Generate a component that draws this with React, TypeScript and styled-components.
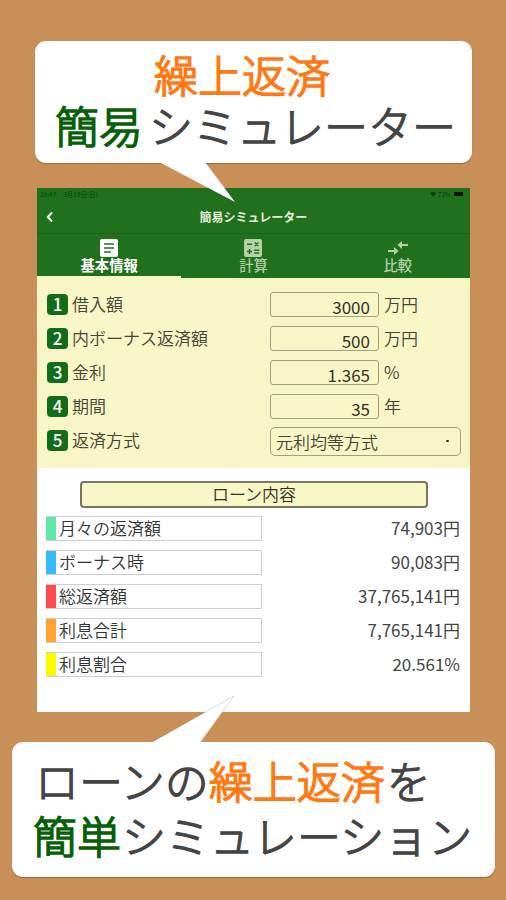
import React from 'react';
import styled, { createGlobalStyle } from 'styled-components';

const Global = createGlobalStyle`
  * { box-sizing: border-box; }
  body { margin: 0; background: #c89058; font-family: 'Noto Sans CJK JP', sans-serif; }
`;

const Poster = styled.main`
  width: 506px;
  height: 900px;
  background: #c89058;
  display: flex;
  flex-direction: column;
  overflow: hidden;
`;

const Bubble = styled.section<{ $bottom?: boolean }>`
  position: relative;
  z-index: 1;
  flex: none;
  display: flex;
  flex-direction: column;
  width: ${p => (p.$bottom ? 483 : 437)}px;
  height: ${p => (p.$bottom ? 135 : 122)}px;
  margin: ${p => (p.$bottom ? '30px 0 0 12px' : '41px 0 0 35px')};
  padding: ${p => (p.$bottom ? '11px 0 0 21px' : '8px 0 0 20px')};
  background: #fff;
  border-radius: 11px;
  box-shadow: 0 1px 1px rgba(90, 60, 30, 0.45);
`;

const Tail = styled.svg<{ $bottom?: boolean }>`
  position: absolute;
  left: ${p => (p.$bottom ? 138 : 125)}px;
  top: ${p => (p.$bottom ? -48 : 120)}px;
  overflow: visible;
`;

const Headline = styled.p<{ $height: number; $indent?: number }>`
  margin: 0 0 0 ${p => p.$indent ?? 0}px;
  height: ${p => p.$height}px;
  line-height: ${p => p.$height}px;
  font-size: 44px;
  font-weight: 300;
  white-space: nowrap;
  color: #444;
  -webkit-text-stroke: 1.3px currentColor;
`;

const Accent = styled.span<{ $tone: 'orange' | 'green'; $gap?: number }>`
  color: ${p => (p.$tone === 'orange' ? '#ff7a14' : '#066006')};
  margin-right: ${p => p.$gap ?? 0}px;
  -webkit-text-stroke-width: 1.6px;
`;

const Device = styled.section`
  flex: none;
  width: 433px;
  height: 524px;
  margin: 25px 0 0 37px;
  background: #fff;
  display: flex;
  flex-direction: column;
`;

const AppHeader = styled.header`
  height: 90px;
  background: #21701e;
  display: flex;
  flex-direction: column;
`;

const StatusBar = styled.div`
  height: 12px;
  padding: 0 7px 0 3px;
  display: flex;
  align-items: center;
  font-size: 6.5px;
  line-height: 12px;
  color: #0c3d0e;
`;

const StatusDate = styled.span`
  margin-left: 7px;
  flex: 1;
`;

const Battery = styled.i`
  width: 9px;
  height: 4px;
  margin-left: 3px;
  border-radius: 1px;
  background: #061406;
`;

const TitleBar = styled.div`
  height: 34px;
  display: grid;
  grid-template-columns: 60px 1fr 60px;
  align-items: center;
  border-bottom: 1px solid #1c641b;
`;

const BackIcon = styled.svg`
  margin-left: 9px;
`;

const AppTitle = styled.h1`
  margin: 0;
  text-align: center;
  font-size: 12px;
  line-height: 34px;
  font-weight: 700;
  color: #e6f1dc;
`;

const Tabs = styled.nav`
  flex: 1;
  display: grid;
  grid-template-columns: repeat(3, 1fr);
`;

const Tab = styled.div<{ $active?: boolean }>`
  display: flex;
  flex-direction: column;
  align-items: center;
  padding-top: 4px;
  color: ${p => (p.$active ? '#fff' : '#b5d1a8')};
  border-bottom: 2px solid ${p => (p.$active ? '#f8f6c6' : 'transparent')};
`;

const TabLabel = styled.span<{ $active?: boolean }>`
  margin-top: -2px;
  font-size: 14.3px;
  line-height: 18px;
  font-weight: ${p => (p.$active ? 700 : 500)};
`;

const Form = styled.div`
  height: 190px;
  background: #f8f6c6;
  padding: 10px 9px 0 10px;
`;

const FormRow = styled.div`
  height: 34px;
  display: grid;
  grid-template-columns: 25px 198px 1fr;
  align-items: center;
  font-size: 17px;
  line-height: 24px;
  color: #444438;
  font-weight: 350;
`;

const NumberBadge = styled.span`
  width: 21px;
  height: 21px;
  margin-bottom: 1px;
  border-radius: 4px;
  background: #136c19;
  color: #fff;
  font-size: 17px;
  line-height: 20px;
  font-weight: 500;
  text-align: center;
`;

const Label = styled.span`
  padding-bottom: 3px;
`;

const Field = styled.div`
  display: flex;
  align-items: center;
  gap: 5px;
`;

const Unit = styled.span`
  padding-bottom: 3px;
`;

const InputBox = styled.span`
  width: 109px;
  height: 25px;
  margin-bottom: 1px;
  border: 1px solid #a3a184;
  border-radius: 3px;
  padding-right: 8px;
  text-align: right;
  line-height: 27px;
  font-weight: 400;
  color: #333329;
`;

const SelectBox = styled.div`
  width: 191px;
  height: 29px;
  border: 1px solid #a3a184;
  border-radius: 5px;
  padding: 0 11px 0 5px;
  display: flex;
  justify-content: space-between;
  align-items: center;
  line-height: 27px;
`;

const SelectMark = styled.i`
  width: 3px;
  height: 2px;
  border-radius: 1px;
  background: #33332b;
`;

const Results = styled.div`
  flex: 1;
  padding: 13px 10px 0 9px;
`;

const ResultsTitle = styled.h2`
  width: 348px;
  height: 27px;
  margin: 0 0 3px 34px;
  border: 2px solid #77765f;
  border-radius: 4px;
  background: #f8f6c6;
  text-align: center;
  font-size: 17px;
  line-height: 21px;
  font-weight: 350;
  color: #333329;
`;

const ResultRow = styled.div`
  height: 34px;
  display: flex;
  align-items: center;
  justify-content: space-between;
  font-size: 17px;
  font-weight: 350;
  color: #333;
`;

const ResultLabel = styled.span<{ $color: string }>`
  width: 216px;
  height: 25px;
  border: 1px solid #cfcfcf;
  border-left: 0;
  padding-left: 13px;
  background: linear-gradient(90deg, ${p => p.$color} 10px, #fff 10px);
  background-origin: border-box;
  line-height: 22px;
`;

const ResultValue = styled.span`
  line-height: 24px;
  padding-bottom: 1px;
  font-weight: 400;
  color: #444;
`;

const DocumentIcon = () => (
  <svg width="20" height="20" viewBox="0 0 20 20">
    <rect x="1" y="1" width="18" height="18" rx="2" fill="currentColor" />
    <path d="M5 6h10M5 10h10M5 14h7" stroke="#21701e" strokeWidth="1.7" />
  </svg>
);

const CalculatorIcon = () => (
  <svg width="20" height="20" viewBox="0 0 20 20">
    <rect x="1" y="1" width="18" height="18" rx="2" fill="currentColor" />
    <path d="M4 6.200h5M11.800 4.500l3.400 3.400M15.200 4.500L11.800 7.900M4 13.500h5M6.500 11v5M11.300 12.300h5M11.300 15h5" stroke="#21701e" strokeWidth="1.5" />
  </svg>
);

const CompareIcon = () => (
  <svg width="20" height="20" viewBox="0 0 20 20">
    <path d="M0 12h6V9l4.500 4-4.500 4v-3H0zM20 6h-6V3L9.500 7l4.500 4V8h6z" fill="currentColor" />
  </svg>
);

const fields = [
  { label: '借入額', value: '3000', unit: '万円' },
  { label: '内ボーナス返済額', value: '500', unit: '万円' },
  { label: '金利', value: '1.365', unit: '%' },
  { label: '期間', value: '35', unit: '年' },
];

const results = [
  { label: '月々の返済額', value: '74,903円', color: '#62e8a6' },
  { label: 'ボーナス時', value: '90,083円', color: '#38b9fa' },
  { label: '総返済額', value: '37,765,141円', color: '#ff4b50' },
  { label: '利息合計', value: '7,765,141円', color: '#ffa331' },
  { label: '利息割合', value: '20.561%', color: '#fbfb00' },
];

export default function App() {
  return (
    <>
      <Global />
      <Poster>
        <Bubble>
          <Headline $height={51} $indent={99}>
            <Accent $tone="orange">繰上返済</Accent>
          </Headline>
          <Headline $height={51}>
            <Accent $tone="green" $gap={6}>簡易</Accent>シミュレーター
          </Headline>
          <Tail width="75" height="42" viewBox="0 0 75 42">
            <path d="M1 1H45L75 41L1 2z" fill="#fff" />
          </Tail>
        </Bubble>

        <Device>
          <AppHeader>
            <StatusBar>
              <span>10:43</span>
              <StatusDate>3月19日(日)</StatusDate>
              <svg width="6" height="5" viewBox="0 0 6 5"><path d="M0 1Q3-1 6 1L3 5z" fill="#0c3d0e" /></svg>
              <span>&nbsp;72%</span>
              <Battery />
            </StatusBar>
            <TitleBar>
              <BackIcon width="8" height="12" viewBox="0 0 8 12">
                <path d="M6 1.500L1.800 6L6 10.500" fill="none" stroke="#fff" strokeWidth="2" />
              </BackIcon>
              <AppTitle>簡易シミュレーター</AppTitle>
            </TitleBar>
            <Tabs>
              <Tab $active><DocumentIcon /><TabLabel $active>基本情報</TabLabel></Tab>
              <Tab><CalculatorIcon /><TabLabel>計算</TabLabel></Tab>
              <Tab><CompareIcon /><TabLabel>比較</TabLabel></Tab>
            </Tabs>
          </AppHeader>

          <Form>
            {fields.map((f, i) => (
              <FormRow key={f.label}>
                <NumberBadge>{i + 1}</NumberBadge>
                <Label>{f.label}</Label>
                <Field><InputBox>{f.value}</InputBox><Unit>{f.unit}</Unit></Field>
              </FormRow>
            ))}
            <FormRow>
              <NumberBadge>5</NumberBadge>
              <Label>返済方式</Label>
              <SelectBox>元利均等方式<SelectMark /></SelectBox>
            </FormRow>
          </Form>

          <Results>
            <ResultsTitle>ローン内容</ResultsTitle>
            {results.map(r => (
              <ResultRow key={r.label}>
                <ResultLabel $color={r.color}>{r.label}</ResultLabel>
                <ResultValue>{r.value}</ResultValue>
              </ResultRow>
            ))}
          </Results>
        </Device>

        <Bubble $bottom>
          <Tail $bottom width="84" height="50" viewBox="0 0 84 50">
            <path d="M1 49L84 2L50 49z" fill="#fff" />
            <path d="M1 48L84 2L50 48" fill="none" stroke="#9a8a78" strokeOpacity=".5" strokeWidth=".6" />
          </Tail>
          <Headline $height={55} $indent={2}>
            ローンの<Accent $tone="orange" $gap={2}>繰上返済</Accent>を
          </Headline>
          <Headline $height={55}>
            <Accent $tone="green" $gap={1}>簡単</Accent>シミュレーション
          </Headline>
        </Bubble>
      </Poster>
    </>
  );
}
